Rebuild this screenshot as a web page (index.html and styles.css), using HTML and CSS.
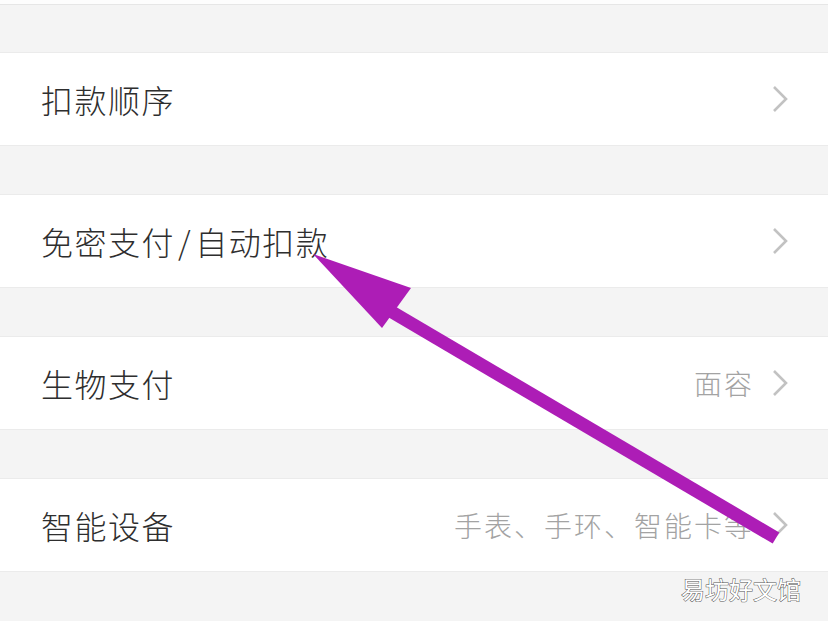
FILE: index.html
```html
<!DOCTYPE html>
<html lang="zh">
<head>
<meta charset="utf-8">
<link rel="stylesheet" href="styles.css">
</head>
<body>
<div class="page">
  <div class="topstrip"></div>
  <div class="gap first"></div>
  <div class="row"><span class="label">扣款顺序</span><span class="right"><svg class="chev" viewBox="0 0 16 28"><path d="M2 2 L14 14 L2 26" /></svg></span></div>
  <div class="gap"></div>
  <div class="row"><span class="label">免密支付<span class="slash">/</span>自动扣款</span><span class="right"><svg class="chev" viewBox="0 0 16 28"><path d="M2 2 L14 14 L2 26" /></svg></span></div>
  <div class="gap"></div>
  <div class="row"><span class="label">生物支付</span><span class="right"><span class="value">面容</span><svg class="chev" viewBox="0 0 16 28"><path d="M2 2 L14 14 L2 26" /></svg></span></div>
  <div class="gap"></div>
  <div class="row"><span class="label">智能设备</span><span class="right"><span class="value">手表、手环、智能卡等</span><svg class="chev" viewBox="0 0 16 28"><path d="M2 2 L14 14 L2 26" /></svg></span></div>
  <div class="gap last"></div>
  <svg class="arrow" viewBox="0 0 828 621">
    <line x1="776" y1="538" x2="392" y2="312" stroke="#ad1db6" stroke-width="13" />
    <polygon points="313,254 411,288 382,328" fill="#ad1db6" />
  </svg>
  <div class="watermark">易坊好文馆</div>
</div>
</body>
</html>
```
FILE: styles.css
```css
* { box-sizing: border-box; }
html, body { margin: 0; padding: 0; }
body {
  width: 828px;
  height: 621px;
  overflow: hidden;
  background: #f4f4f4;
  font-family: "Noto Sans CJK SC", "Noto Sans", sans-serif;
}
.page {
  position: relative;
  width: 828px;
  height: 621px;
  display: flex;
  flex-direction: column;
}
.topstrip {
  flex: none;
  height: 5px;
  background: #fdfdfd;
  border-bottom: 1px solid #e6e6e6;
}
.gap {
  height: 48px;
  flex: none;
  background: #f4f4f4;
}
.gap.first { height: 47px; }
.gap.last { flex: 1; }
.row {
  flex: none;
  height: 94px;
  background: #ffffff;
  border-top: 1px solid #ebebeb;
  border-bottom: 1px solid #ebebeb;
  display: flex;
  align-items: center;
  justify-content: space-between;
  padding: 0 40px 0 41px;
}
.label {
  font-size: 32px;
  font-weight: 300;
  color: #2e2e2e;
  letter-spacing: 1.5px;
  line-height: 1;
}
.slash {
  margin: 0 3px;
}
.right {
  display: flex;
  align-items: center;
  gap: 18px;
}
.value {
  font-size: 28px;
  font-weight: 300;
  color: #a3a3a3;
  letter-spacing: 2px;
  line-height: 1;
}
.chev {
  width: 16px;
  height: 28px;
}
.chev path {
  fill: none;
  stroke: #c2c2c2;
  stroke-width: 2.6;
}
.arrow {
  position: absolute;
  left: 0;
  top: 0;
  width: 828px;
  height: 621px;
}
.watermark {
  position: absolute;
  left: 681px;
  top: 573px;
  font-size: 24px;
  line-height: 32px;
  color: #ffffff;
  -webkit-text-stroke: 1px #555555;
  paint-order: stroke fill;
}
```
